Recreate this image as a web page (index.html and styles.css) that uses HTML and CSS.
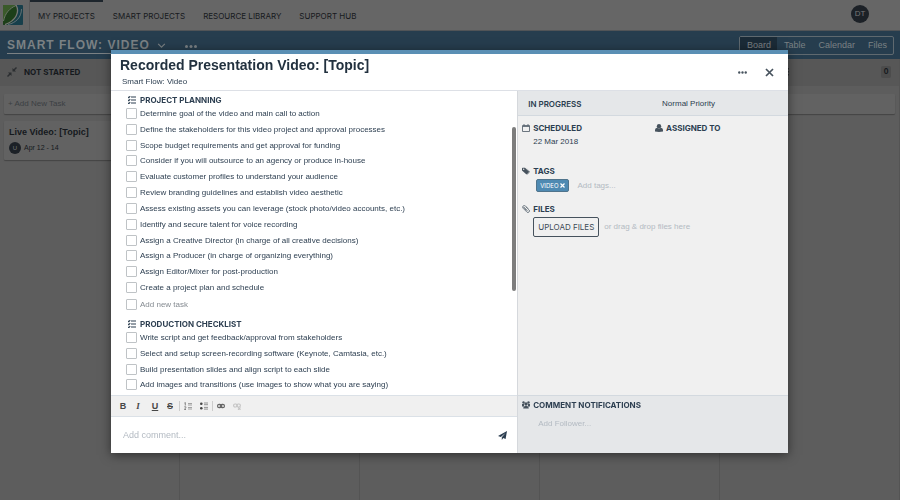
FILE: index.html
```html
<!DOCTYPE html>
<html lang="en">
<head>
<meta charset="utf-8">
<meta name="viewport" content="width=device-width, initial-scale=1">
<title>Smart Flow: Video</title>
<link rel="stylesheet" href="styles.css">
</head>
<body>
<header class="topbar">
  <a class="logo" href="#" aria-label="Home">
    <svg viewBox="0 0 20 20" width="20" height="20"><rect width="20" height="20" rx="1" fill="#173f4b"/><path d="M0 1Q0 0 1 0H13C18 7 13 17 3 20H1Q0 20 0 19Z" fill="#1d3f19"/><path d="M0 0H13C6 3 1 9 0 17Z" fill="#3a5a2a"/><path d="M13 0C17 7 13 16 2 19.500" fill="none" stroke="#777" stroke-width="1.300"/><path d="M18.500 4C18.500 12 13 18 5 19.500" fill="none" stroke="#6d7678" stroke-width=".9"/><path d="M.5 16C2 8 7 3 13 .5" fill="none" stroke="#777f72" stroke-width=".9"/></svg>
  </a>
  <nav class="nav">
    <a class="current" href="#">MY PROJECTS</a>
    <a href="#">SMART PROJECTS</a>
    <a href="#">RESOURCE LIBRARY</a>
    <a href="#">SUPPORT HUB</a>
  </nav>
  <span class="user">DT</span>
</header>
<div class="projectbar">
  <h1>SMART FLOW: VIDEO</h1>
  <svg class="chevron" viewBox="0 0 10 6" width="9" height="5"><path d="M1 1l4 4 4-4" fill="none" stroke="#7b8184" stroke-width="1.300"/></svg>
  <svg class="more" viewBox="0 0 12 3" width="12" height="3" fill="#7b8184"><circle cx="1.500" cy="1.500" r="1.500"/><circle cx="6" cy="1.500" r="1.500"/><circle cx="10.500" cy="1.500" r="1.500"/></svg>
  <nav class="views">
    <a class="active" href="#">Board</a><a href="#">Table</a><a href="#">Calendar</a><a href="#">Files</a>
  </nav>
</div>
<main class="board">
  <section class="column">
    <h2 class="column-head">
      <svg viewBox="0 0 10 10" width="10" height="10" fill="#2b2e31"><path d="M5.500 4.500V1l1.200 1.200L9 0l1 1-2.200 2.300L9 4.500zM4.500 5.500V9L3.300 7.800 1 10 0 9l2.200-2.300L1 5.500z"/></svg>
      NOT STARTED
    </h2>
    <div class="cards">
      <button class="add-card">+ Add New Task</button>
      <article class="card"><h3>Live Video: [Topic]</h3><p><span class="avatar">U</span>Apr 12 - 14</p></article>
    </div>
  </section>
  <section class="column"><div class="column-head"></div><div class="cards"><div class="add-card"></div></div></section>
  <section class="column"><div class="column-head"></div><div class="cards"><div class="add-card"></div></div></section>
  <section class="column"><div class="column-head"></div><div class="cards"><div class="add-card"></div></div></section>
  <section class="column"><div class="column-head"><svg class="grip" viewBox="0 0 2 8" width="2" height="8" fill="#2b2e31"><path d="M0 0h2v1.500H0zM0 3h2v1.500H0zM0 6h2v1.500H0z"/></svg><span class="count">0</span></div><div class="cards"><div class="add-card"></div></div></section>
</main>

<div class="overlay">
  <div class="dialog" role="dialog" aria-labelledby="task-title">
    <header class="dialog-head">
      <div class="titles">
        <h2 id="task-title">Recorded Presentation Video: [Topic]</h2>
        <p>Smart Flow: Video</p>
      </div>
      <button class="plain" aria-label="More"><svg viewBox="0 0 10 3" width="9" height="3" fill="#46525d"><circle cx="1.400" cy="1.500" r="1.300"/><circle cx="5" cy="1.500" r="1.300"/><circle cx="8.600" cy="1.500" r="1.300"/></svg></button>
      <button class="plain" aria-label="Close"><svg viewBox="0 0 9 9" width="9" height="9"><path d="M1 1l7 7M8 1l-7 7" stroke="#46525d" stroke-width="1.700"/></svg></button>
    </header>
    <div class="dialog-body">
      <div class="work">
        <div class="lists">
          <h3 class="label"><svg viewBox="0 0 8 8" width="8" height="8"><path d="M3 1h5M3 4h5M3 7h5M0 1l.8.700L2.200.200M0 4l.8.700 1.400-1.500M0 7l.8.700 1.400-1.500" fill="none" stroke="#2c3e50" stroke-width="1.100"/></svg>PROJECT PLANNING</h3>
          <ul class="tasks planning">
            <li><label><input type="checkbox">Determine goal of the video and main call to action</label></li>
            <li><label><input type="checkbox">Define the stakeholders for this video project and approval processes</label></li>
            <li><label><input type="checkbox">Scope budget requirements and get approval for funding</label></li>
            <li><label><input type="checkbox">Consider if you will outsource to an agency or produce in-house</label></li>
            <li><label><input type="checkbox">Evaluate customer profiles to understand your audience</label></li>
            <li><label><input type="checkbox">Review branding guidelines and establish video aesthetic</label></li>
            <li><label><input type="checkbox">Assess existing assets you can leverage (stock photo/video accounts, etc.)</label></li>
            <li><label><input type="checkbox">Identify and secure talent for voice recording</label></li>
            <li><label><input type="checkbox">Assign a Creative Director (in charge of all creative decisions)</label></li>
            <li><label><input type="checkbox">Assign a Producer (in charge of organizing everything)</label></li>
            <li><label><input type="checkbox">Assign Editor/Mixer for post-production</label></li>
            <li><label><input type="checkbox">Create a project plan and schedule</label></li>
          </ul>
          <div class="new-task"><input type="checkbox" aria-label="New task done"><input type="text" placeholder="Add new task" aria-label="New task"></div>
          <h3 class="label"><svg viewBox="0 0 8 8" width="8" height="8"><path d="M3 1h5M3 4h5M3 7h5M0 1l.8.700L2.200.200M0 4l.8.700 1.400-1.500M0 7l.8.700 1.400-1.500" fill="none" stroke="#2c3e50" stroke-width="1.100"/></svg>PRODUCTION CHECKLIST</h3>
          <ul class="tasks production">
            <li><label><input type="checkbox">Write script and get feedback/approval from stakeholders</label></li>
            <li><label><input type="checkbox">Select and setup screen-recording software (Keynote, Camtasia, etc.)</label></li>
            <li><label><input type="checkbox">Build presentation slides and align script to each slide</label></li>
            <li><label><input type="checkbox">Add images and transitions (use images to show what you are saying)</label></li>
          </ul>
          <span class="scroll-thumb"></span>
        </div>
        <div class="toolbar">
          <button class="b" aria-label="Bold">B</button>
          <button class="i" aria-label="Italic">I</button>
          <button class="u" aria-label="Underline">U</button>
          <button class="s" aria-label="Strikethrough">S</button>
          <span class="rule"></span>
          <button aria-label="Numbered list"><svg viewBox="0 0 8 8" width="8" height="8"><path d="M4 1.500h4M4 3h4M4 5.500h4M4 7h4" stroke="#999" stroke-width=".9"/><path d="M.5 1l.8-.6V3.500M.3 4.800h1.500v.9L.4 7.500H2" fill="none" stroke="#777" stroke-width=".9"/></svg></button>
          <button aria-label="Bulleted list"><svg viewBox="0 0 8 8" width="8" height="8"><path d="M4 1h4M4 2.700h4M4 5.400h4M4 7.100h4" stroke="#888" stroke-width=".9"/><circle cx="1.300" cy="1.800" r="1.300" fill="#444"/><circle cx="1.300" cy="6.200" r="1.300" fill="#444"/></svg></button>
          <span class="rule"></span>
          <button aria-label="Link"><svg viewBox="0 0 8 6" width="8" height="6" fill="none" stroke="#666" stroke-width="1.200"><rect x=".6" y="1.300" width="3.800" height="3.400" rx="1.500"/><rect x="3.600" y="1.300" width="3.800" height="3.400" rx="1.500"/><path d="M2.500 3h3"/></svg></button>
          <button aria-label="Unlink"><svg viewBox="0 0 8 7" width="8" height="7" fill="none" stroke="#c4c4c4" stroke-width="1.100"><rect x=".6" y="1" width="3.600" height="3" rx="1.400"/><rect x="3.800" y="1" width="3.600" height="3" rx="1.400"/><path d="M5 4.500l2.500 2.300M7.500 4.500L5 6.800"/></svg></button>
        </div>
        <div class="comment">
          <input type="text" placeholder="Add comment..." aria-label="Comment">
          <button class="plain" aria-label="Send"><svg viewBox="0 0 9 9" width="9" height="9" fill="#2c3e50"><path d="M9 0L7.600 8 5.200 7 3.800 9V6.300L7.500 2 2.800 5.900 0 4.900z"/></svg></button>
        </div>
      </div>
      <aside class="side">
        <div class="status"><span class="state">IN PROGRESS</span><span class="priority">Normal Priority</span></div>
        <div class="details">
          <div class="pair">
            <section>
              <h3 class="label"><svg viewBox="0 0 8 8" width="8" height="8" fill="none" stroke="#5c6873"><path d="M.5 1.500h7v6h-7zM.5 2.500h7M2 0v2M6 0v2" stroke-width=".9"/></svg>SCHEDULED</h3>
              <p>22 Mar 2018</p>
            </section>
            <section>
              <h3 class="label"><svg viewBox="0 0 8 8" width="8" height="8" fill="#46525d"><circle cx="4" cy="2.200" r="2.200"/><path d="M0 7.500V6Q0 4 2 3.800Q4 5.300 6 3.800Q8 4 8 6v1.500Q4 8.300 0 7.500z"/></svg>ASSIGNED TO</h3>
            </section>
          </div>
          <section class="tags">
            <h3 class="label"><svg viewBox="0 0 8 8" width="8" height="8" fill="#46525d"><path d="M0 1.500Q0 .8.700.8H3L7.200 4.800 4.500 7.500 0 3.500zM4 .8L8 4.700 5.500 7.500 5 7.200 7.500 4.800z"/><circle cx="1.700" cy="2.300" r=".7" fill="#f0f0f0"/></svg>TAGS</h3>
            <div class="line"><button class="tag">VIDEO<svg viewBox="0 0 5 5" width="5" height="5"><path d="M.5.500l4 4M4.500.500l-4 4" stroke="#fff" stroke-width="1.200"/></svg></button><input type="text" placeholder="Add tags..." aria-label="Add tags"></div>
          </section>
          <section>
            <h3 class="label"><svg viewBox="0 0 8 8" width="8" height="8" fill="none" stroke="#6b7680" stroke-width=".9"><path d="M6 3.500L3.300.800Q2.300 0 1.200.900Q0 2 1 3.200L5 7.200Q6 8 7 7Q8 6 7.200 5L3.800 1.800M2 2.200L5.500 5.700M2 1.800Q1.500 2.500 2.300 3.300L4.500 5.500"/></svg>FILES</h3>
            <div class="line files"><button class="upload">UPLOAD FILES</button><span>or drag &amp; drop files here</span></div>
          </section>
        </div>
        <section class="followers">
          <h3 class="label"><svg viewBox="0 0 8 8" width="8" height="8" fill="#46525d"><circle cx="1.500" cy="1.500" r="1.200"/><circle cx="6.500" cy="1.500" r="1.200"/><circle cx="4" cy="3" r="1.700"/><path d="M0 3h2v2.500H0zM6 3h2v2.500H6zM1.200 7.500Q1.200 5 3 5h2q1.800 0 1.800 2.500z"/></svg>COMMENT NOTIFICATIONS</h3>
          <input type="text" placeholder="Add Follower..." aria-label="Add follower">
        </section>
      </aside>
    </div>
  </div>
</div>
</body>
</html>
```
FILE: styles.css
```css
* { box-sizing: border-box; }
html, body { height: 100%; }
body {
  margin: 0;
  display: flex;
  flex-direction: column;
  overflow: hidden;
  background: #5d5d5d;
  color: #2c3e50;
  font: 8px/12px "Liberation Sans", Arial, sans-serif;
}
h1, h2, h3, p, ul { margin: 0; padding: 0; }
ul { list-style: none; }
a { color: inherit; text-decoration: none; }
button, input { font: inherit; color: inherit; margin: 0; }
button { border: 0; padding: 0; background: none; }
svg { display: block; flex: none; }

.topbar { display: flex; height: 31px; flex: none; background: #666; border-bottom: 1px solid #515457; }
.logo { width: 30px; padding: 5px 3px; border-right: 1px solid #585858; }
.nav { display: flex; flex: 1; gap: 2px; color: #16191d; font: 8px/30px Inter, sans-serif; }
.nav a { padding: 2px 8px 0; line-height: 28px; }
.nav .current { border-top: 2px solid #1d252c; padding-top: 0; }
.user {
  width: 18px; height: 18px; margin: 5px 31px 0 0; border-radius: 50%;
  background: #1c2127; color: #777; text-align: center; line-height: 18px;
}

.projectbar { display: flex; align-items: center; flex: none; height: 28px; padding: 0 6px 0 7px; background: #263d4e; }
.projectbar h1 { color: #7b8184; font-size: 12px; line-height: 16px; letter-spacing: 1px; border-bottom: 1px solid #7b8184; }
.chevron { margin-left: 7px; }
.more { margin: 3px 0 0 19px; }
.views { display: flex; margin-left: auto; border: 1px solid #5f696f; border-radius: 2px; color: #7b8184; font-size: 9px; line-height: 17px; }
.views a { padding: 0 6px 0 7px; }
.views .active { background: #1b2b37; }

.board { display: grid; grid-template-columns: repeat(5, 1fr); flex: 1; }
.column { border-right: 1px solid #545454; }
.column-head {
  display: flex; align-items: center; gap: 7px; height: 27px; padding: 0 8px 2px 7px;
  background: #575757; color: #15191d; font: bold 8px/12px Inter, sans-serif;
}
.cards { display: grid; gap: 7px; padding: 8px 4px; }
.add-card, .card { background: #626262; box-shadow: 0 1px 1px #444; border-radius: 1px; }
.add-card { height: 20px; padding: 0 4px; text-align: left; color: #3b3f43; }
.card { height: 39px; padding: 5px; color: #15191d; }
.card h3 { font-size: 9px; line-height: 12px; }
.card p { display: flex; align-items: center; gap: 3px; margin-top: 4px; font-size: 7px; line-height: 12px; }
.avatar { width: 12px; height: 12px; border-radius: 50%; background: #1c2127; color: #777; text-align: center; font-size: 6px; }
.grip { margin-left: 60px; }
.count { margin-left: auto; width: 10px; background: #4c4c4c; border-radius: 2px; text-align: center; font-size: 7px; }

.overlay { position: fixed; inset: 0; display: flex; padding: 50px 112px 47px 111px; }
.dialog {
  display: flex; flex-direction: column; flex: 1; min-width: 0;
  background: #fff; border-top: 4px solid #5a8fb4; box-shadow: 0 2px 10px rgba(0, 0, 0, .5);
}
.dialog-head { display: flex; align-items: center; height: 37px; padding: 0 14px 0 9px; gap: 18px; border-bottom: 1px solid #dde0e6; }
.titles { flex: 1; }
.titles h2 { font-size: 14px; line-height: 18px; color: #22313f; }
.titles p { padding: 1px 0 0 2px; line-height: 14px; }
.dialog-body { display: grid; grid-template-columns: 3fr 2fr; flex: 1; min-height: 0; }
.work { display: flex; flex-direction: column; min-height: 0; }
.lists { position: relative; flex: 1; min-height: 0; overflow: hidden; padding: 3px 15px 0; }
.label { display: flex; align-items: center; gap: 3px; font: bold 8px/12px Inter, sans-serif; color: #2c3e50; }
.lists .label { gap: 4px; padding-left: 2px; }
.tasks { display: grid; grid-auto-rows: 1fr; }
.planning { height: 190px; }
.production { height: 63px; }
.tasks label, .new-task { display: flex; align-items: center; gap: 3px; line-height: 15px; }
.new-task { height: 17px; margin-bottom: 5px; }
input[type="checkbox"] { appearance: none; flex: none; width: 11px; height: 11px; background: #fff; border: 1px solid #bfc3c6; border-radius: 1px; }
input[type="text"] { border: 0; padding: 0; background: none; outline: 0; min-width: 0; }
::placeholder { color: #b3bac2; opacity: 1; }
.new-task ::placeholder { color: #858b91; }
.scroll-thumb { position: absolute; right: 1px; top: 36px; width: 4px; height: 164px; border-radius: 2px; background: #7d7d7d; }
.toolbar { display: flex; align-items: center; height: 22px; padding: 0 8px; background: #f0f0f0; border: solid #dbe1e7; border-width: 1px 0; color: #474747; }
.toolbar button { display: grid; place-items: center; width: 16px; font: bold 9px/12px "Liberation Sans", Arial, sans-serif; }
.toolbar button:first-child { width: 8px; }
.toolbar .i { font-family: "Liberation Serif", serif; font-style: italic; width: 22px; }
.toolbar .u { text-decoration: underline; width: 12px; }
.toolbar .s { text-decoration: line-through; width: 18px; }
.rule { width: 1px; height: 10px; background: #ccc; }
.comment { display: flex; align-items: center; height: 36px; padding: 0 10px 0 12px; font-size: 9px; }
.comment input { flex: 1; }

.side { display: flex; flex-direction: column; background: #f0f0f0; border-left: 1px solid #d5d8dc; }
.status { display: grid; grid-template-columns: 1fr 1fr; height: 25px; padding: 0 0 0 10px; line-height: 25px; background: #e5e7e9; border-bottom: 1px solid #d3d9df; }
.state { font: 600 8px/26px Inter, sans-serif; }
.priority { padding-left: 4px; }
.details { flex: 1; padding: 6px 0 0 4px; }
.pair { display: grid; grid-template-columns: 1fr 1fr; height: 43px; }
.pair p { padding-left: 11px; line-height: 15px; }
.tags { margin-bottom: 11px; }
.line { display: flex; align-items: center; gap: 8px; padding: 2px 0 0 14px; }
.line input { width: 100px; }
.tag { display: flex; align-items: center; gap: 2px; height: 13px; padding: 0 3px; background: #4f8ab2; border: 1px solid #50748c; border-radius: 2px; color: #fff; font: 6px/11px Inter, sans-serif; }
.files { gap: 5px; padding-left: 11px; color: #b3bac2; }
.upload { height: 20px; padding: 0 4px; border: 1px solid #46525d; border-radius: 2px; color: #3d4a56; font: 8px/18px Inter, sans-serif; }
.followers { height: 58px; padding: 3px 0 0 4px; background: #e5e7e9; border-top: 1px solid #d3d9df; }
.followers input { display: block; margin: 7px 0 0 16px; }
```
